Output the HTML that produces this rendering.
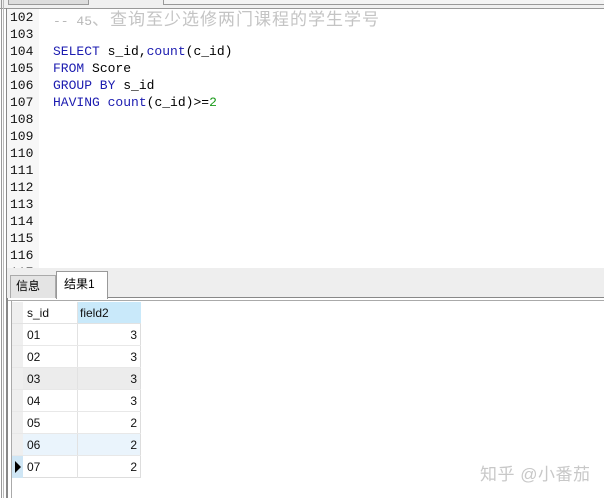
<!DOCTYPE html>
<html><head><meta charset="utf-8"><style>
*{margin:0;padding:0;box-sizing:border-box}
body{width:604px;height:498px;overflow:hidden;background:#fff;position:relative;font-family:"Liberation Sans","Noto Sans CJK SC",sans-serif}
.abs{position:absolute}
.code{font-family:"Liberation Mono","Noto Sans CJK SC",monospace;font-size:13px;line-height:17px;white-space:pre;color:#000}
.kw{color:#1c1cb0}
.cm{color:#b8b8b8}
.cj{font-size:17px;letter-spacing:1px;color:#c4c4c4;font-family:"Noto Sans CJK SC",sans-serif}
.num{color:#1a9a1a}
.cell{position:absolute;font-size:12px;color:#111;height:22px;line-height:22px}
</style></head><body>
<div class="abs" style="left:0;top:0;width:604px;height:9px;background:#f0f0f0"></div>
<div class="abs" style="left:8px;top:0;width:81px;height:5px;background:#ddd;border:1px solid #999;border-top:none"></div>
<div class="abs" style="left:163px;top:0;width:441px;height:5px;background:#f4f4f4;border:1px solid #999;border-top:none;border-right:none"></div>
<div class="abs" style="left:0;top:8px;width:604px;height:1px;background:#999"></div>
<div class="abs" style="left:1px;top:0;width:1px;height:498px;background:#999"></div>
<div class="abs" style="left:3px;top:0;width:1px;height:498px;background:#bbb"></div>
<div class="abs" style="left:6px;top:8px;width:1px;height:490px;background:#888"></div>
<div class="abs" style="left:7px;top:9px;width:32px;height:260px;background:#f7f7f7"></div>
<div class="abs code" style="left:10px;top:9px;color:#111">102
103
104
105
106
107
108
109
110
111
112
113
114
115
116
117</div>
<div class="abs" style="left:53px;top:9px;height:17px;line-height:17px;white-space:nowrap"><span class="code cm">-- 45</span><span class="cj">、查询至少选修两门课程的学生学号</span></div>
<div class="abs code" style="left:53px;top:43px"><span class="kw">SELECT</span> s_id,<span class="kw">count</span>(c_id)
<span class="kw">FROM</span> Score
<span class="kw">GROUP BY</span> s_id
<span class="kw">HAVING</span> <span class="kw">count</span>(c_id)&gt;=<span class="num">2</span></div>
<div class="abs" style="left:7px;top:268px;width:597px;height:30px;background:#eeeeee"></div>
<div class="abs" style="left:10px;top:275px;width:46px;height:23px;background:#e4e4e4;border:1px solid #aaa;border-bottom:none;font-size:12px;line-height:21px;padding-left:5px">信息</div>
<div class="abs" style="left:56px;top:271px;width:52px;height:28px;background:#fff;border:1px solid #999;border-bottom:none;font-size:12px;line-height:24px;padding-left:7px">结果1</div>
<div class="abs" style="left:108px;top:297px;width:496px;height:1px;background:#888"></div>
<div class="abs" style="left:7px;top:300px;width:597px;height:1px;background:#aaa"></div>
<div class="abs" style="left:7px;top:298px;width:1px;height:200px;background:#888"></div>
<div class="abs" style="left:11px;top:300px;width:1px;height:198px;background:#aaa"></div>
<div class="abs" style="left:12px;top:302px;width:11px;height:176px;background:#efefef"></div>
<div class="abs" style="left:12px;top:456px;width:11px;height:22px;background:#cfe6f5"></div>
<div class="abs" style="left:23px;top:302px;width:118px;height:176px;border-right:1px solid #ddd;border-bottom:1px solid #ddd"></div>
<div class="abs" style="left:77px;top:302px;width:64px;height:21px;background:#c9e9fa"></div>
<div class="abs" style="left:23px;top:368px;width:117px;height:22px;background:#ececec"></div>
<div class="abs" style="left:23px;top:434px;width:117px;height:22px;background:#eaf4fc"></div>
<div class="abs" style="left:77px;top:302px;width:1px;height:176px;background:#e2e2e2"></div>
<div class="abs" style="left:12px;top:323px;width:129px;height:1px;background:#e2e2e2"></div>
<div class="abs" style="left:12px;top:345px;width:129px;height:1px;background:#e8e8e8"></div>
<div class="abs" style="left:12px;top:367px;width:129px;height:1px;background:#e8e8e8"></div>
<div class="abs" style="left:12px;top:389px;width:129px;height:1px;background:#e8e8e8"></div>
<div class="abs" style="left:12px;top:411px;width:129px;height:1px;background:#e8e8e8"></div>
<div class="abs" style="left:12px;top:433px;width:129px;height:1px;background:#e8e8e8"></div>
<div class="abs" style="left:12px;top:455px;width:129px;height:1px;background:#e8e8e8"></div>
<svg class="abs" style="left:14px;top:461px" width="8" height="12"><path d="M1 0 L7 6 L1 12 Z" fill="#000"/></svg>
<div class="cell" style="left:27px;top:302px">s_id</div>
<div class="cell" style="left:80px;top:302px">field2</div>
<div class="cell" style="left:27px;top:324px">01</div><div class="cell" style="left:77px;width:60px;text-align:right;top:324px">3</div>
<div class="cell" style="left:27px;top:346px">02</div><div class="cell" style="left:77px;width:60px;text-align:right;top:346px">3</div>
<div class="cell" style="left:27px;top:368px">03</div><div class="cell" style="left:77px;width:60px;text-align:right;top:368px">3</div>
<div class="cell" style="left:27px;top:390px">04</div><div class="cell" style="left:77px;width:60px;text-align:right;top:390px">3</div>
<div class="cell" style="left:27px;top:412px">05</div><div class="cell" style="left:77px;width:60px;text-align:right;top:412px">2</div>
<div class="cell" style="left:27px;top:434px">06</div><div class="cell" style="left:77px;width:60px;text-align:right;top:434px">2</div>
<div class="cell" style="left:27px;top:456px">07</div><div class="cell" style="left:77px;width:60px;text-align:right;top:456px">2</div>
<div class="abs" style="left:480px;top:460px;font-size:17px;color:#c8c8c8;white-space:nowrap;letter-spacing:0.5px">知乎 @小番茄</div>
</body></html>
